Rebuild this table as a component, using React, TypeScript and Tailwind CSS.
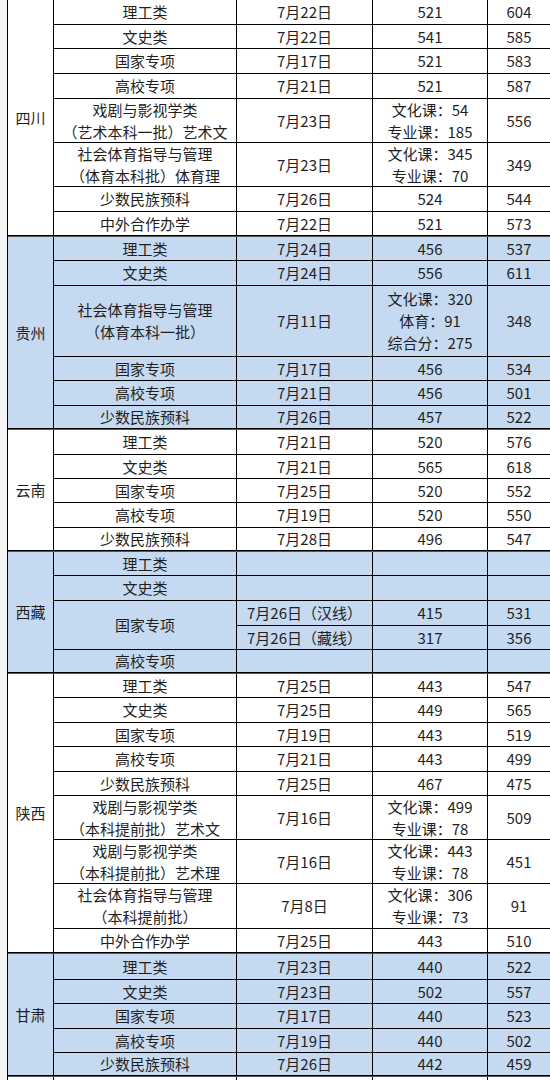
type Row = {
  cat?: string[];
  catSpan?: string;
  date: string;
  score: string[];
  min: string;
  h: string;
};

type Province = {
  name: string;
  span: string;
  bg: string;
  rows: Row[];
};

const provinces: Province[] = [
  {
    name: "四川",
    span: "row-span-8",
    bg: "bg-white",
    rows: [
      { cat: ["理工类"], date: "7月22日", score: ["521"], min: "604", h: "h-[25px]" },
      { cat: ["文史类"], date: "7月22日", score: ["541"], min: "585", h: "h-[24px]" },
      { cat: ["国家专项"], date: "7月17日", score: ["521"], min: "583", h: "h-[25px]" },
      { cat: ["高校专项"], date: "7月21日", score: ["521"], min: "587", h: "h-[25px]" },
      {
        cat: ["戏剧与影视学类", "（艺术本科一批）艺术文"],
        date: "7月23日",
        score: ["文化课：54", "专业课：185"],
        min: "556",
        h: "h-[44px]",
      },
      {
        cat: ["社会体育指导与管理", "（体育本科批）体育理"],
        date: "7月23日",
        score: ["文化课：345", "专业课：70"],
        min: "349",
        h: "h-[44px]",
      },
      { cat: ["少数民族预科"], date: "7月26日", score: ["524"], min: "544", h: "h-[25px]" },
      { cat: ["中外合作办学"], date: "7月22日", score: ["521"], min: "573", h: "h-[24px]" },
    ],
  },
  {
    name: "贵州",
    span: "row-span-6",
    bg: "bg-[#c5d9f1]",
    rows: [
      { cat: ["理工类"], date: "7月24日", score: ["456"], min: "537", h: "h-[24px]" },
      { cat: ["文史类"], date: "7月24日", score: ["556"], min: "611", h: "h-[25px]" },
      {
        cat: ["社会体育指导与管理", "（体育本科一批）"],
        date: "7月11日",
        score: ["文化课：320", "体育：91", "综合分：275"],
        min: "348",
        h: "h-[71px]",
      },
      { cat: ["国家专项"], date: "7月17日", score: ["456"], min: "534", h: "h-[24px]" },
      { cat: ["高校专项"], date: "7月21日", score: ["456"], min: "501", h: "h-[25px]" },
      { cat: ["少数民族预科"], date: "7月26日", score: ["457"], min: "522", h: "h-[23px]" },
    ],
  },
  {
    name: "云南",
    span: "row-span-5",
    bg: "bg-white",
    rows: [
      { cat: ["理工类"], date: "7月21日", score: ["520"], min: "576", h: "h-[25px]" },
      { cat: ["文史类"], date: "7月21日", score: ["565"], min: "618", h: "h-[24px]" },
      { cat: ["国家专项"], date: "7月25日", score: ["520"], min: "552", h: "h-[24px]" },
      { cat: ["高校专项"], date: "7月19日", score: ["520"], min: "550", h: "h-[25px]" },
      { cat: ["少数民族预科"], date: "7月28日", score: ["496"], min: "547", h: "h-[23px]" },
    ],
  },
  {
    name: "西藏",
    span: "row-span-5",
    bg: "bg-[#c5d9f1]",
    rows: [
      { cat: ["理工类"], date: "", score: [""], min: "", h: "h-[24px]" },
      { cat: ["文史类"], date: "", score: [""], min: "", h: "h-[25px]" },
      {
        cat: ["国家专项"],
        catSpan: "row-span-2",
        date: "7月26日（汉线）",
        score: ["415"],
        min: "531",
        h: "h-[25px]",
      },
      { date: "7月26日（藏线）", score: ["317"], min: "356", h: "h-[24px]" },
      { cat: ["高校专项"], date: "", score: [""], min: "", h: "h-[23px]" },
    ],
  },
  {
    name: "陕西",
    span: "row-span-9",
    bg: "bg-white",
    rows: [
      { cat: ["理工类"], date: "7月25日", score: ["443"], min: "547", h: "h-[24px]" },
      { cat: ["文史类"], date: "7月25日", score: ["449"], min: "565", h: "h-[25px]" },
      { cat: ["国家专项"], date: "7月19日", score: ["443"], min: "519", h: "h-[24px]" },
      { cat: ["高校专项"], date: "7月21日", score: ["443"], min: "499", h: "h-[25px]" },
      { cat: ["少数民族预科"], date: "7月25日", score: ["467"], min: "475", h: "h-[24px]" },
      {
        cat: ["戏剧与影视学类", "（本科提前批）艺术文"],
        date: "7月16日",
        score: ["文化课：499", "专业课：78"],
        min: "509",
        h: "h-[44px]",
      },
      {
        cat: ["戏剧与影视学类", "（本科提前批）艺术理"],
        date: "7月16日",
        score: ["文化课：443", "专业课：78"],
        min: "451",
        h: "h-[44px]",
      },
      {
        cat: ["社会体育指导与管理", "（本科提前批）"],
        date: "7月8日",
        score: ["文化课：306", "专业课：73"],
        min: "91",
        h: "h-[45px]",
      },
      { cat: ["中外合作办学"], date: "7月25日", score: ["443"], min: "510", h: "h-[24px]" },
    ],
  },
  {
    name: "甘肃",
    span: "row-span-5",
    bg: "bg-[#c5d9f1]",
    rows: [
      { cat: ["理工类"], date: "7月23日", score: ["440"], min: "522", h: "h-[26px]" },
      { cat: ["文史类"], date: "7月23日", score: ["502"], min: "557", h: "h-[24px]" },
      { cat: ["国家专项"], date: "7月17日", score: ["440"], min: "523", h: "h-[25px]" },
      { cat: ["高校专项"], date: "7月19日", score: ["440"], min: "502", h: "h-[24px]" },
      { cat: ["少数民族预科"], date: "7月26日", score: ["442"], min: "459", h: "h-[23px]" },
    ],
  },
];

const cell =
  "flex flex-col items-center justify-center border-r border-b border-black text-center leading-[22px]";
const cols = "grid grid-cols-[46px_183px_136px_115px_63px]";

function Lines({ lines }: { lines: string[] }) {
  return (
    <>
      {lines.map((l, i) => (
        <span key={i} className="whitespace-nowrap">
          {l}
        </span>
      ))}
    </>
  );
}

function ProvinceBlock({ p }: { p: Province }) {
  return (
    <div className={`${cols} ${p.bg} border-b border-[#555]`}>
      <div className={`${cell} ${p.span}`}>{p.name}</div>
      {p.rows.map((r, i) => (
        <div key={i} className="contents">
          {r.cat && (
            <div className={`${cell} ${r.catSpan ?? r.h}`}>
              <Lines lines={r.cat} />
            </div>
          )}
          <div className={`${cell} ${r.h}`}>{r.date}</div>
          <div className={`${cell} ${r.h}`}>
            <Lines lines={r.score} />
          </div>
          <div className={`${cell} ${r.h}`}>{r.min}</div>
        </div>
      ))}
    </div>
  );
}

export default function App() {
  return (
    <div className="min-h-screen w-[550px] overflow-hidden bg-[#f4f4f4] pl-[7px] text-[15px] text-[#1f1f1f] font-['Liberation_Sans_Narrow','Noto_Sans_CJK_SC',sans-serif]">
      <div className="border-l border-black">
        {provinces.map((p) => (
          <ProvinceBlock key={p.name} p={p} />
        ))}
        <div className={`${cols} bg-white`}>
          <div className={`${cell} h-[25px]`} />
          <div className={`${cell} h-[25px]`} />
          <div className={`${cell} h-[25px]`} />
          <div className={`${cell} h-[25px]`} />
          <div className={`${cell} h-[25px]`} />
        </div>
      </div>
    </div>
  );
}
